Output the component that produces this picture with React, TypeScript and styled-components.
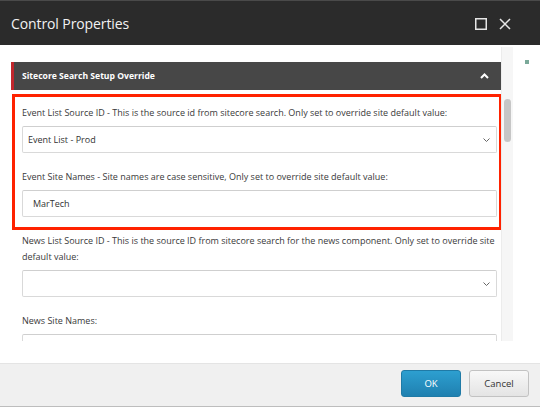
import React from "react";
import styled, { createGlobalStyle } from "styled-components";

const GlobalStyle = createGlobalStyle`
  html, body {
    margin: 0;
    padding: 0;
    background: #ffffff;
    overflow: hidden;
  }
  body {
    font-family: "Open Sans", "Liberation Sans", sans-serif;
    color: #333;
  }
`;

const Dialog = styled.div`
  width: 540px;
  height: 407px;
  display: flex;
  flex-direction: column;
  background: #fff;
`;

const TitleBar = styled.div`
  height: 45px;
  box-sizing: border-box;
  border-top: 1px solid #4a4a4a;
  background: #2b2b2b;
  display: flex;
  align-items: center;
  padding: 1px 29px 0 11px;
  color: #f2f2f2;
`;

const Title = styled.div`
  flex: 1;
  font-size: 14px;
  letter-spacing: -0.1px;
`;

const TitleIcons = styled.div`
  display: flex;
  align-items: center;
  gap: 12px;
`;

const Body = styled.div`
  flex: 1;
  display: flex;
  padding: 2px 0 22px 11px;
  min-height: 0;
`;

const Pane = styled.div`
  flex: 1;
  overflow: hidden;
  padding-top: 15px;
`;

const ScrollTrack = styled.div`
  width: 12px;
  background: #f6f6f6;
  border-left: 1px solid #ececec;
  box-sizing: border-box;
  display: flex;
  justify-content: center;
`;

const ScrollThumb = styled.div`
  width: 7px;
  height: 43px;
  margin-top: 52px;
  border-radius: 4px;
  background: #c6c6c6;
`;

const Gutter = styled.div`
  width: 27px;
  display: flex;
  justify-content: center;
  padding-top: 13px;
  box-sizing: border-box;
`;

const Marker = styled.div`
  width: 4px;
  height: 4px;
  background: #7aa999;
`;

const SectionHeader = styled.div`
  height: 28px;
  background: #474747;
  border-left: 3px solid #c1272d;
  display: flex;
  align-items: center;
  justify-content: space-between;
  padding: 0 12px 0 8px;
  margin-bottom: 4px;
  color: #fff;
  font-size: 8.6px;
  font-weight: 700;
`;

const Highlight = styled.div`
  border: 3px solid #ff2200;
  margin: 0 -1px 0 1px;
  padding: 8px 2px 10px 7px;
`;

const Fields = styled.div<{ $inset?: boolean }>`
  display: flex;
  flex-direction: column;
  gap: 16px;
  padding: ${(p) => (p.$inset ? "3px 4px 0 11px" : "0")};
`;

const Field = styled.div`
  display: flex;
  flex-direction: column;
  gap: 5px;
`;

const Label = styled.div`
  font-size: 9px;
  line-height: 16px;
  color: #3a3a3a;
`;

const Box = styled.div<{ $pad: number }>`
  height: 27px;
  box-sizing: border-box;
  border: 1px solid #d9d9d9;
  border-top-color: #cfcfcf;
  border-radius: 2px;
  background: #fff;
  display: flex;
  align-items: center;
  justify-content: space-between;
  padding: 0 5px 0 ${(p) => p.$pad}px;
  font-size: 9px;
  color: #333;
`;

const Footer = styled.div`
  height: 42px;
  background: #f0f0f0;
  border-top: 1px solid #e4e4e4;
  border-bottom: 1px solid #bdbdbd;
  box-sizing: content-box;
  display: flex;
  justify-content: flex-end;
  align-items: flex-start;
  gap: 8px;
  padding: 0 11px 0 0;
`;

const Button = styled.button<{ $primary?: boolean }>`
  margin-top: 6px;
  width: 60px;
  height: 27px;
  border-radius: 3px;
  font-family: "Open Sans", "Liberation Sans", sans-serif;
  font-size: 9.5px;
  cursor: pointer;
  border: 1px solid ${(p) => (p.$primary ? "#1f7aa6" : "#c2c2c2")};
  color: ${(p) => (p.$primary ? "#fff" : "#333")};
  background: ${(p) =>
    p.$primary
      ? "linear-gradient(#2d9fd0, #1f80b0)"
      : "linear-gradient(#f8f8f8, #e4e4e4)"};
`;

const Chevron = ({ up, color }: { up?: boolean; color: string }) => (
  <svg width="9" height="6" viewBox="0 0 9 6">
    <path
      d={up ? "M1 5 L4.5 1.5 L8 5" : "M1.5 1.5 L4.5 4.5 L7.5 1.5"}
      fill="none"
      stroke={color}
      strokeWidth={up ? 2 : 1}
    />
  </svg>
);

export default function App() {
  return (
    <>
      <GlobalStyle />
      <Dialog>
        <TitleBar>
          <Title>Control Properties</Title>
          <TitleIcons>
            <svg width="12" height="12" viewBox="0 0 12 12">
              <rect x="0.75" y="0.75" width="10.5" height="10.5" fill="none" stroke="#e6e6e6" strokeWidth="1.5" />
            </svg>
            <svg width="12" height="12" viewBox="0 0 12 12">
              <path d="M1 1 L11 11 M11 1 L1 11" stroke="#e6e6e6" strokeWidth="1.5" />
            </svg>
          </TitleIcons>
        </TitleBar>
        <Body>
          <Pane>
            <SectionHeader>
              <span>Sitecore Search Setup Override</span>
              <Chevron up color="#fff" />
            </SectionHeader>
            <Highlight>
              <Fields>
                <Field>
                  <Label>
                    Event List Source ID - This is the source id from sitecore search. Only set to override site default value:
                  </Label>
                  <Box $pad={5}>
                    <span>Event List - Prod</span>
                    <Chevron color="#666" />
                  </Box>
                </Field>
                <Field>
                  <Label>
                    Event Site Names - Site names are case sensitive, Only set to override site default value:
                  </Label>
                  <Box $pad={10}>MarTech</Box>
                </Field>
              </Fields>
            </Highlight>
            <Fields $inset>
              <Field>
                <Label>
                  News List Source ID - This is the source ID from sitecore search for the news component. Only set to override site default value:
                </Label>
                <Box $pad={5}>
                  <span />
                  <Chevron color="#666" />
                </Box>
              </Field>
              <Field>
                <Label>News Site Names:</Label>
                <Box $pad={10} />
              </Field>
            </Fields>
          </Pane>
          <ScrollTrack>
            <ScrollThumb />
          </ScrollTrack>
          <Gutter>
            <Marker />
          </Gutter>
        </Body>
        <Footer>
          <Button $primary>OK</Button>
          <Button>Cancel</Button>
        </Footer>
      </Dialog>
    </>
  );
}
